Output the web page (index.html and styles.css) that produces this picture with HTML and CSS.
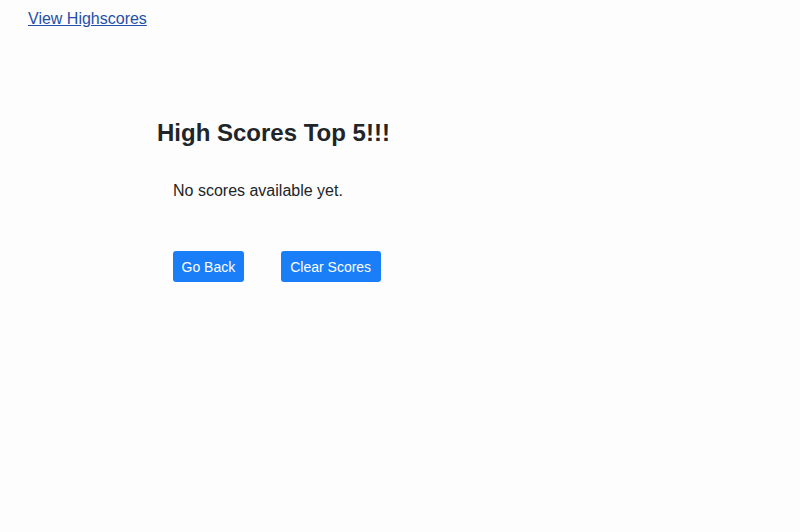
FILE: index.html
```html
<!DOCTYPE html>
<html>
<head>
<meta charset="utf-8">
<link rel="stylesheet" href="styles.css">
</head>
<body>
<header class="top">
  <a class="hs-link" href="#">View Highscores</a>
</header>
<main class="card">
  <h1 class="title">High Scores Top 5!!!</h1>
  <p class="empty">No scores available yet.</p>
  <div class="actions">
    <button class="btn">Go Back</button>
    <button class="btn btn-wide">Clear Scores</button>
  </div>
</main>
</body>
</html>
```
FILE: styles.css
```css
html, body {
  margin: 0;
  padding: 0;
  background: #fdfdfd;
  font-family: "Liberation Sans", Arial, sans-serif;
  color: #212529;
}
.top {
  padding: 9px 28px 0;
  height: 23px;
}
.hs-link {
  color: #1f4fa6;
  font-size: 16px;
  line-height: 20px;
  text-decoration: underline;
}
.card {
  padding: 86px 0 0 157px;
}
.title {
  margin: 0;
  font-size: 24px;
  font-weight: bold;
  line-height: 30px;
}
.empty {
  margin: 33px 0 0 16px;
  font-size: 16px;
  line-height: 20px;
}
.actions {
  display: flex;
  gap: 37px;
  margin: 50px 0 0 16px;
}
.btn {
  background: #1a7ef9;
  color: #fff;
  border: none;
  border-radius: 3px;
  height: 31px;
  padding: 0 8.5px;
  font-family: "Liberation Sans", Arial, sans-serif;
  font-size: 14px;
}
.btn-wide {
  padding: 0 9.5px;
}
```
